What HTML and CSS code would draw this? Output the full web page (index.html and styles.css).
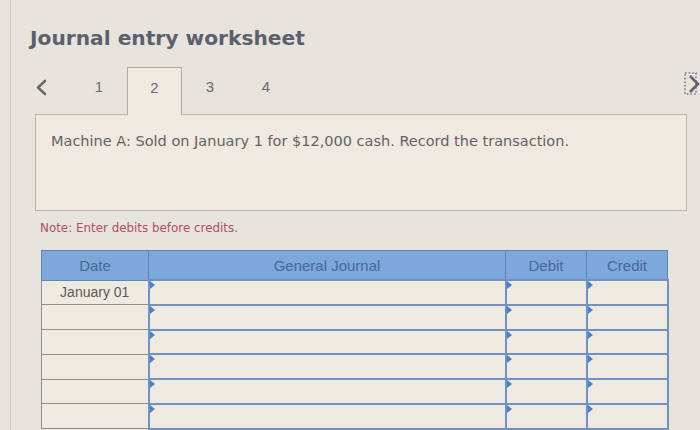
FILE: index.html
```html
<!DOCTYPE html>
<html>
<head>
<meta charset="utf-8">
<link rel="stylesheet" href="styles.css">
</head>
<body>
<div class="frame">
  <h1 class="title">Journal entry worksheet</h1>
  <div class="tabs">
    <span class="prev"><svg width="13" height="17" viewBox="0 0 13 17"><path d="M10 2 L3 8.5 L10 15" fill="none" stroke="#6a6a6e" stroke-width="2.6" stroke-linecap="round" stroke-linejoin="round"/></svg></span>
    <span class="tab">1</span>
    <span class="tab active">2</span>
    <span class="tab">3</span>
    <span class="tab">4</span>
    <span class="next"><svg width="18" height="24" viewBox="0 0 18 24"><rect x="1" y="1" width="11" height="21" fill="none" stroke="#7a7a88" stroke-width="1.6" stroke-dasharray="1.6 2"/><path d="M6 4 L14 12 L6 20" fill="none" stroke="#5f6170" stroke-width="2.6" stroke-linejoin="miter"/></svg></span>
  </div>
  <div class="question">Machine A: Sold on January 1 for $12,000 cash. Record the transaction.</div>
  <p class="note">Note: Enter debits before credits.</p>
  <table class="journal">
    <thead>
      <tr><th class="c-date">Date</th><th class="c-gj">General Journal</th><th class="c-num">Debit</th><th class="c-num">Credit</th></tr>
    </thead>
    <tbody>
      <tr><td class="date">January 01</td><td class="in"></td><td class="in"></td><td class="in"></td></tr>
      <tr><td class="date"></td><td class="in"></td><td class="in"></td><td class="in"></td></tr>
      <tr><td class="date"></td><td class="in"></td><td class="in"></td><td class="in"></td></tr>
      <tr><td class="date"></td><td class="in"></td><td class="in"></td><td class="in"></td></tr>
      <tr><td class="date"></td><td class="in"></td><td class="in"></td><td class="in"></td></tr>
      <tr><td class="date"></td><td class="in"></td><td class="in"></td><td class="in"></td></tr>
    </tbody>
  </table>
</div>
</body>
</html>
```

FILE: styles.css
```css
html, body {
  margin: 0;
  padding: 0;
  height: 100%;
  overflow: hidden;
}
body {
  background: #e7e3dd;
  font-family: "DejaVu Sans", Verdana, sans-serif;
}
.frame {
  margin-left: 10px;
  border-left: 1px solid #cdc9c3;
  height: 100%;
  padding: 26px 0 0 0;
  box-sizing: border-box;
}
.title {
  margin: 0 0 0 19px;
  font-size: 20.2px;
  font-weight: bold;
  color: #5d5f6d;
  line-height: 24px;
}
.tabs {
  display: flex;
  align-items: stretch;
  margin: 17px 0 0 14px;
  height: 47px;
  font-family: "Liberation Sans", Arial, sans-serif;
  font-size: 15px;
  color: #6c6c6c;
}
.prev {
  width: 46px;
  box-sizing: border-box;
  display: flex;
  align-items: center;
  padding-left: 10px;
  padding-bottom: 7px;
}
.tab {
  width: 56px;
  display: flex;
  justify-content: center;
  padding-top: 11px;
  box-sizing: border-box;
}
.tab.active {
  width: 55px;
  background: #efe9e1;
  border: 1px solid #aeaba7;
  border-bottom: none;
  position: relative;
  z-index: 1;
  margin-bottom: -1px;
}
.next {
  margin-left: auto;
  padding-top: 5px;
  width: 16px;
  overflow: hidden;
}
.question {
  margin: 0 0 0 24px;
  width: 652px;
  height: 97px;
  border: 1px solid #b9b6b2;
  background: #efe9e1;
  box-sizing: border-box;
  padding: 18px 0 0 15px;
  font-size: 14.5px;
  color: #626266;
}
.note {
  margin: 10px 0 0 29px;
  font-size: 11.9px;
  color: #b14f67;
  line-height: 14px;
}
.journal {
  margin: 15px 0 0 30px;
  border-collapse: collapse;
  width: 627px;
  font-family: "Liberation Sans", Arial, sans-serif;
  font-size: 14px;
  table-layout: fixed;
}
.journal th {
  background: #7ea7db;
  color: #4b6996;
  font-weight: normal;
  font-size: 15px;
  height: 28px;
  padding: 0;
  border: 1px solid #6184b4;
}
.c-date { width: 106px; }
.c-gj { width: 356px; }
.c-num { width: 80px; }
.journal td {
  height: 24.8px;
  padding: 0;
  background: #eeeae2;
  box-sizing: border-box;
}
.journal td.date {
  border: 1px solid #8e8e8e;
  text-align: center;
  color: #5b5b5b;
  font-size: 14px;
}
.journal td.in {
  border: 2px solid #7191c2;
  position: relative;
}
.journal td.in::before {
  content: "";
  position: absolute;
  left: 0;
  top: 0;
  border-left: 5px solid #4d7fc8;
  border-top: 4px solid transparent;
  border-bottom: 4px solid transparent;
}
```
